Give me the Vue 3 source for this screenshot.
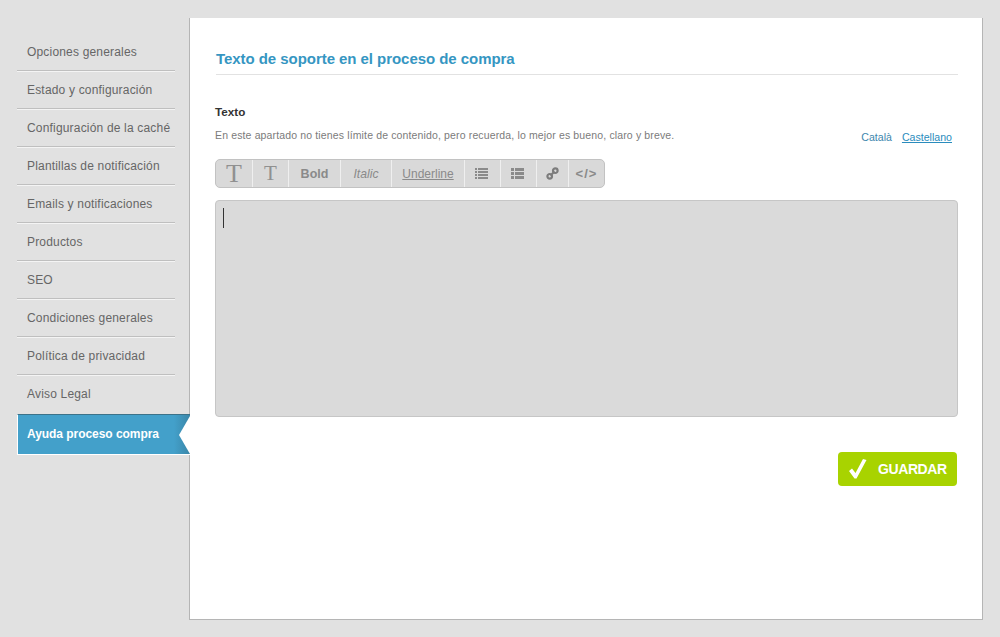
<script setup>
const menu = ['Opciones generales','Estado y configuración','Configuración de la caché','Plantillas de notificación','Emails y notificaciones','Productos','SEO','Condiciones generales','Política de privacidad','Aviso Legal']
</script>

<template>
  <div class="page">
    <nav class="side">
      <a v-for="m in menu" :key="m" class="item">{{ m }}</a>
      <a class="item active">Ayuda proceso compra</a>
    </nav>
    <main class="panel">
      <h1 class="title">Texto de soporte en el proceso de compra</h1>
      <h2 class="label">Texto</h2>
      <div class="hintrow">
        <p class="hint">En este apartado no tienes límite de contenido, pero recuerda, lo mejor es bueno, claro y breve.</p>
        <div class="langs"><a>Català</a><a class="cur">Castellano</a></div>
      </div>
      <div class="toolbar">
        <span class="tool t1">T</span>
        <span class="tool t2">T</span>
        <span class="tool t3">Bold</span>
        <span class="tool t4">Italic</span>
        <span class="tool t5">Underline</span>
        <span class="tool t6">
          <svg width="13" height="11" viewBox="0 0 13 11" fill="#8a8a8a"><rect x="0" y="0" width="2" height="2"/><rect x="3" y="0" width="10" height="2"/><rect x="0" y="3" width="2" height="2"/><rect x="3" y="3" width="10" height="2"/><rect x="0" y="6" width="2" height="2"/><rect x="3" y="6" width="10" height="2"/><rect x="0" y="9" width="2" height="2"/><rect x="3" y="9" width="10" height="2"/></svg>
        </span>
        <span class="tool t7">
          <svg width="13" height="11" viewBox="0 0 13 11" fill="#8a8a8a"><rect x="0" y="0" width="3" height="3"/><rect x="4" y="0" width="9" height="3"/><rect x="0" y="4" width="3" height="3"/><rect x="4" y="4" width="9" height="3"/><rect x="0" y="8" width="3" height="3"/><rect x="4" y="8" width="9" height="3"/></svg>
        </span>
        <span class="tool t8">
          <svg width="13" height="13" viewBox="0 0 13 13" fill="none" stroke="#7c7c7c" stroke-width="2.2"><circle cx="9.3" cy="3.7" r="2.3"/><circle cx="3.7" cy="9.3" r="2.3"/><path d="M4.5 8.5 8.5 4.5"/></svg>
        </span>
        <span class="tool t9">&lt;/&gt;</span>
      </div>
      <div class="editor"><span class="caret"></span></div>
      <div class="actions">
        <button class="save">
          <svg width="18" height="20" viewBox="0 0 18 20"><path d="M0 12 3 9.5 6.5 14 14 0 17.5 1 7.5 19.5 5.5 19.5Z" fill="#fff"/></svg>
          <span>GUARDAR</span>
        </button>
      </div>
    </main>
  </div>
</template>

<style>
html, body { margin: 0; background: #e1e1e1; }
</style>

<style scoped>
.page { display: flex; align-items: flex-start; width: 1000px; height: 637px; padding-top: 18px; box-sizing: border-box; background: #e1e1e1; font-family: "Liberation Sans", Arial, sans-serif; overflow: hidden; }
.side { width: 189px; flex: none; padding: 15px 0 0 17px; box-sizing: border-box; display: flex; flex-direction: column; }
.item { display: block; height: 38px; width: 158px; box-sizing: border-box; padding: 0 0 0 10px; line-height: 38px; font-size: 12px; letter-spacing: 0.18px; color: #666; border-bottom: 1px solid #bfbfbf; box-shadow: 0 1px 0 #f4f4f4; white-space: nowrap; }
.item:nth-child(10) { border-bottom: none; box-shadow: none; height: 45px; line-height: 38px; }
.item.active { position: relative; width: 173px; height: 41px; line-height: 39px; font-size: 12px; letter-spacing: -0.05px; font-weight: bold; color: #fff; background: #43a0ca; border-left: 1px solid #fff; padding-left: 9px; border-top: 1px solid #3c7289; border-bottom: 1px solid #fff; box-shadow: none; margin-top: -6px; z-index: 1; }
.item.active::before { content: ""; position: absolute; right: 0; top: 0; width: 16px; height: 39px; background: linear-gradient(90deg, #43a0ca, #3a86a8); }
.item.active::after { content: ""; position: absolute; right: 0; top: 1px; width: 11px; height: 38px; background: #fff; clip-path: polygon(100% 0, 0 50%, 100% 100%); }
.panel { width: 794px; height: 602px; flex: none; box-sizing: border-box; background: #fff; border-left: 1px solid #b5b5b5; border-right: 1px solid #b5b5b5; border-bottom: 1px solid #b5b5b5; padding: 32px 24px 0 25px; }
.title { margin: 0 0 0 1px; height: 24px; line-height: 18px; font-size: 15px; letter-spacing: -0.05px; font-weight: bold; color: #3596c2; border-bottom: 1px solid #e2e2e2; }
.label { margin: 28px 0 0; font-size: 11.7px; line-height: 17px; font-weight: bold; color: #333; }
.hintrow { display: flex; justify-content: space-between; align-items: flex-start; height: 31px; margin-top: 8px; }
.hint { margin: 0; font-size: 10.5px; letter-spacing: 0.14px; line-height: 14px; color: #7b7b7b; }
.langs { display: flex; gap: 10px; padding: 2px 6px 0 0; font-size: 10.6px; line-height: 14px; color: #3d86ad; }
.cur { text-decoration: underline; color: #2a8cbd; }
.toolbar { display: flex; width: 390px; height: 29px; box-sizing: border-box; background: #d9d9d9; border: 1px solid #c2c2c2; border-radius: 5px; }
.tool { display: flex; align-items: center; justify-content: center; box-sizing: border-box; border-right: 1px solid #efefef; color: #8a8a8a; font-size: 12px; }
.tool:last-child { border-right: none; }
.t1 { width: 37px; font-family: "Liberation Serif", serif; font-size: 26px; color: #909090; }
.t2 { width: 36px; font-family: "Liberation Serif", serif; font-size: 21px; color: #909090; }
.t3 { width: 52px; font-weight: bold; font-size: 12.5px; }
.t4 { width: 51px; font-style: italic; font-size: 12.2px; }
.t5 { width: 73px; text-decoration: underline; }
.t6 { width: 36px; padding-right: 2px; }
.t7 { width: 36px; padding-right: 2px; }
.t8 { width: 32px; }
.t9 { width: 35px; font-weight: bold; font-size: 13px; letter-spacing: 1px; }
.editor { height: 217px; margin-top: 12px; box-sizing: border-box; background: #dadada; border: 1px solid #c6c6c6; border-radius: 4px; padding: 7px 7px; }
.caret { display: block; width: 1px; height: 20px; background: #333; }
.actions { display: flex; justify-content: flex-end; margin: 35px 1px 0 0; }
.save { display: flex; align-items: center; width: 119px; height: 34px; padding: 0 0 0 11px; box-sizing: border-box; border: none; border-radius: 4px; background: #a8d300; color: #fff; font: bold 14px "Liberation Sans", Arial, sans-serif; letter-spacing: -0.4px; gap: 11px; }
</style>
